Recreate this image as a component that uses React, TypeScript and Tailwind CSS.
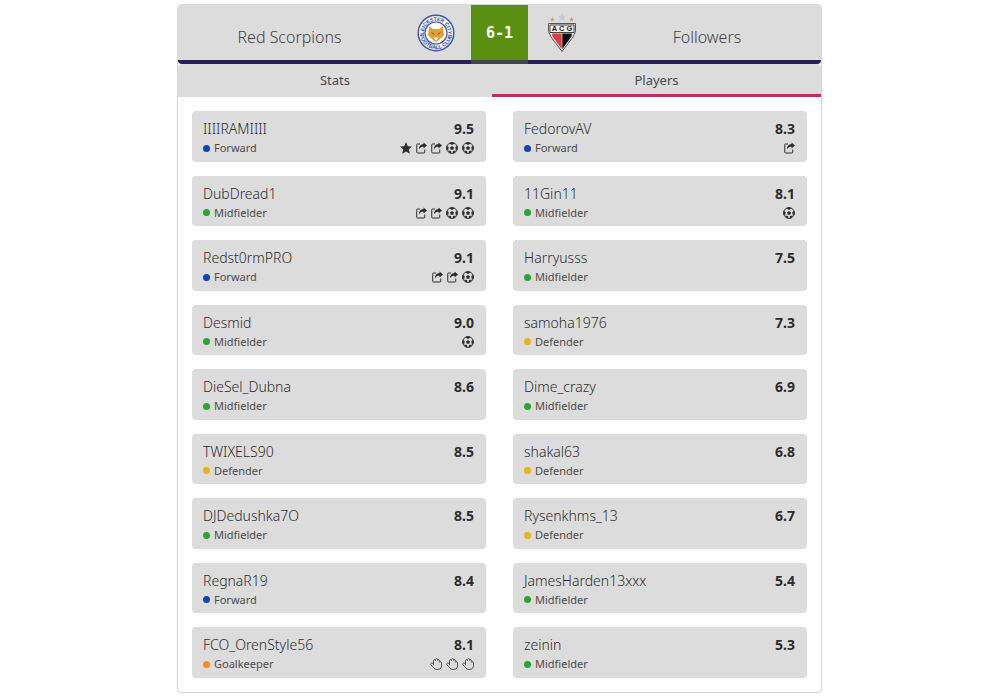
import React from "react";

type Position = "Forward" | "Midfielder" | "Defender" | "Goalkeeper";
type Award = "star" | "assist" | "goal" | "save";

interface Player {
  name: string;
  position: Position;
  rating: string;
  awards?: Award[];
}

const home: Player[] = [
  {
    name: "IIIIRAMIIII",
    position: "Forward",
    rating: "9.5",
    awards: ["star", "assist", "assist", "goal", "goal"],
  },
  {
    name: "DubDread1",
    position: "Midfielder",
    rating: "9.1",
    awards: ["assist", "assist", "goal", "goal"],
  },
  {
    name: "Redst0rmPRO",
    position: "Forward",
    rating: "9.1",
    awards: ["assist", "assist", "goal"],
  },
  { name: "Desmid", position: "Midfielder", rating: "9.0", awards: ["goal"] },
  { name: "DieSel_Dubna", position: "Midfielder", rating: "8.6" },
  { name: "TWIXELS90", position: "Defender", rating: "8.5" },
  { name: "DJDedushka7O", position: "Midfielder", rating: "8.5" },
  { name: "RegnaR19", position: "Forward", rating: "8.4" },
  {
    name: "FCO_OrenStyle56",
    position: "Goalkeeper",
    rating: "8.1",
    awards: ["save", "save", "save"],
  },
];

const away: Player[] = [
  { name: "FedorovAV", position: "Forward", rating: "8.3", awards: ["assist"] },
  { name: "11Gin11", position: "Midfielder", rating: "8.1", awards: ["goal"] },
  { name: "Harryusss", position: "Midfielder", rating: "7.5" },
  { name: "samoha1976", position: "Defender", rating: "7.3" },
  { name: "Dime_crazy", position: "Midfielder", rating: "6.9" },
  { name: "shakal63", position: "Defender", rating: "6.8" },
  { name: "Rysenkhms_13", position: "Defender", rating: "6.7" },
  { name: "JamesHarden13xxx", position: "Midfielder", rating: "5.4" },
  { name: "zeinin", position: "Midfielder", rating: "5.3" },
];

const dotColors: Record<Position, string> = {
  Forward: "bg-[#0b45c4]",
  Midfielder: "bg-[#27a82b]",
  Defender: "bg-[#e8b50c]",
  Goalkeeper: "bg-[#f78b1f]",
};

const AwardIcon: React.FC<{ type: Award }> = ({ type }) => {
  if (type === "star") {
    return (
      <svg className="size-3" viewBox="0 0 24 24" fill="currentColor">
        <path d="M12 0l3.500 8.300 8.500.9-6.500 5.700 2.200 8.600L12 19l-7.700 4.500 2.200-8.600L0 9.200l8.500-.9z" />
      </svg>
    );
  }
  if (type === "assist") {
    return (
      <svg className="h-3 w-[11px]" viewBox="0 0 22 24" fill="none">
        <path
          d="M8 4H3a1.500 1.500 0 0 0-1.500 1.500V20.500A1.500 1.500 0 0 0 3 22h13a1.500 1.500 0 0 0 1.500-1.500V15"
          stroke="currentColor"
          strokeWidth={2}
        />
        <path
          d="M15 1l7 6-7 6v-3.500c-4 0-6.500 1-9 5.500C5.500 8 9 4.500 15 4z"
          fill="currentColor"
        />
      </svg>
    );
  }
  if (type === "goal") {
    return (
      <svg className="size-3" viewBox="0 0 24 24" fill="none">
        <circle cx="12" cy="12" r="10.800" stroke="currentColor" strokeWidth={2} />
        <path
          d="M12 8l4 3-1.500 4.600h-5L8 11zM6.500 2.500L12 6l5.500-3.500L12 .5zM23 7.500L18.500 10l1 6 3.500-1zM1 7.500L5.500 10l-1 6L1 15zM4.500 17l5.500 1 .5 5-4-1.500zM19.500 17l-5.500 1-.5 5 4-1.500z"
          fill="currentColor"
        />
      </svg>
    );
  }
  return (
    <svg
      className="size-3"
      viewBox="0 0 24 24"
      fill="none"
      stroke="currentColor"
      strokeWidth={1.6}
      strokeLinejoin="round"
    >
      <path d="M7 13V5.500C7 2.500 11 2.500 11 5V3.500C11 .5 15.500.5 15.500 3.500V5c0-2.500 4-2 4 1v2.500c0-2 3.500-1.500 3.500 1V15c0 5-3 8-8 8-4.500 0-6.500-1.500-8.500-4.500L1.500 13C.5 10.500 4 9 5.500 11z" />
    </svg>
  );
};

const HomeCrest = () => (
  <svg className="size-[38px] shrink-0" viewBox="0 0 38 38">
    <defs>
      <path id="crest-top" d="M6.800 19a12.200 12.200 0 0 1 24.400 0" />
      <path id="crest-bottom" d="M2.800 19a16.200 16.200 0 0 0 32.400 0" />
    </defs>
    <circle cx="19" cy="19" r="17.800" fill="#f1f3f8" stroke="#3c56ae" strokeWidth="1.500" />
    <circle cx="19" cy="19" r="11" fill="#fff" stroke="#3c56ae" strokeWidth="1.200" />
    <g
      fill="#3450a8"
      fontFamily="Liberation Sans, sans-serif"
      fontSize="5"
      fontWeight="bold"
      textAnchor="middle"
    >
      <text>
        <textPath href="#crest-top" startOffset="50%">
          LEICESTER CITY
        </textPath>
      </text>
      <text fontSize="5.500">
        <textPath href="#crest-bottom" startOffset="50%">
          FOOTBALL CLUB
        </textPath>
      </text>
    </g>
    <path
      d="M12 12l4 3h6l4-3 .5 6.500 1 2.500-4.500 4-4 3.500-4-3.500-4.500-4 1-2.500z"
      fill="#e5a32c"
    />
    <path d="M14.500 18.500l3 2M23.500 18.500l-3 2" stroke="#6b5330" />
    <path d="M16.500 23.500h5L19 27z" fill="#eef0f6" />
  </svg>
);

const AwayCrest = () => (
  <svg className="h-[40px] w-[30px] shrink-0" viewBox="0 0 30 40">
    <path
      d="M15 0l1.200 2.800 3 .2-2.300 2 .8 3L15 6.400 12.300 8l.8-3-2.300-2 3-.2z"
      fill="#c4c9d8"
    />
    <path
      d="M5.500 4l.7 1.500 1.800.2-1.300 1.200.3 1.800-1.500-.9-1.500.9.3-1.800L3 5.700l1.800-.2zM24.500 4l.7 1.500 1.800.2-1.300 1.200.3 1.800-1.500-.9-1.500.9.3-1.800L22 5.700l1.800-.2z"
      fill="#cfa36c"
    />
    <path
      d="M1.500 10.500h27v8L26 24 15 38.500 4 24 1.500 18.500z"
      fill="#e8e8e8"
      stroke="#555"
    />
    <path d="M5 20.500h9.700V36L5.500 23.500z" fill="#e43b42" />
    <path d="M15.300 20.500H25l-.5 3L15.300 36z" fill="#111" />
    <path d="M3 12h24v7.500H3z" fill="#f4f4f4" stroke="#444" />
    <text
      x="15"
      y="18.300"
      textAnchor="middle"
      fontFamily="Liberation Sans, sans-serif"
      fontSize="7.500"
      fontWeight="bold"
      fill="#222"
    >
      A C G
    </text>
  </svg>
);

const PlayerCard: React.FC<{ player: Player }> = ({ player }) => (
  <li className="flex justify-between rounded bg-[#dcdcdc] pt-2 pr-3 pl-[11px]">
    <div>
      <p className="text-sm leading-5 font-light text-[#2d2d2d]">{player.name}</p>
      <p className="flex items-center gap-1 text-[11px] leading-[18px] text-[#4d4d4d]">
        <span className={`size-[7px] rounded-full ${dotColors[player.position]}`} />
        {player.position}
      </p>
    </div>
    <div className="flex flex-col items-end text-[#2d2d2d]">
      <p className="text-sm leading-5 font-bold">{player.rating}</p>
      <div className="flex h-[18px] items-center gap-1">
        {player.awards?.map((award, i) => (
          <AwardIcon key={i} type={award} />
        ))}
      </div>
    </div>
  </li>
);

export default function App() {
  return (
    <main className="min-h-screen bg-white pt-1 pr-[178px] pb-[7px] pl-[177px] font-['Noto_Sans','Open_Sans',sans-serif]">
      <section className="rounded border border-[#d4d4d4]">
        <header className="grid h-[59px] grid-cols-[1fr_57px_1fr] overflow-hidden rounded bg-[#dcdcdc]">
          <div className="flex items-center border-b-4 border-[#25205a] pr-4">
            <h2 className="flex-1 pt-2 pr-4 text-center text-base font-light text-[#444]">
              Red Scorpions
            </h2>
            <HomeCrest />
          </div>
          <div className="flex items-center justify-center border-b-4 border-[#3f474b] bg-[#5b8f12] pt-0.5 font-['DejaVu_Sans_Mono',monospace] text-[15px] font-bold text-white">
            6-1
          </div>
          <div className="flex items-center border-b-4 border-[#25205a] pl-[19px]">
            <AwayCrest />
            <h2 className="flex-1 pt-2 pl-4 text-center text-base font-light text-[#444]">
              Followers
            </h2>
          </div>
        </header>
        <nav className="grid grid-cols-[314fr_329fr] rounded-t bg-[#dcdcdc] text-[13px] text-[#4a4a4a]">
          <button type="button" className="h-[33px] border-b-3 border-transparent pt-1">
            Stats
          </button>
          <button type="button" className="h-[33px] border-b-3 border-[#c22a68] pt-1">
            Players
          </button>
        </nav>
        <div className="grid grid-cols-2 gap-[27px] p-[14px]">
          {[home, away].map((team, i) => (
            <ul key={i} className="grid min-h-[567px] auto-rows-fr gap-[14px]">
              {team.map((player) => (
                <PlayerCard key={player.name} player={player} />
              ))}
            </ul>
          ))}
        </div>
      </section>
    </main>
  );
}
